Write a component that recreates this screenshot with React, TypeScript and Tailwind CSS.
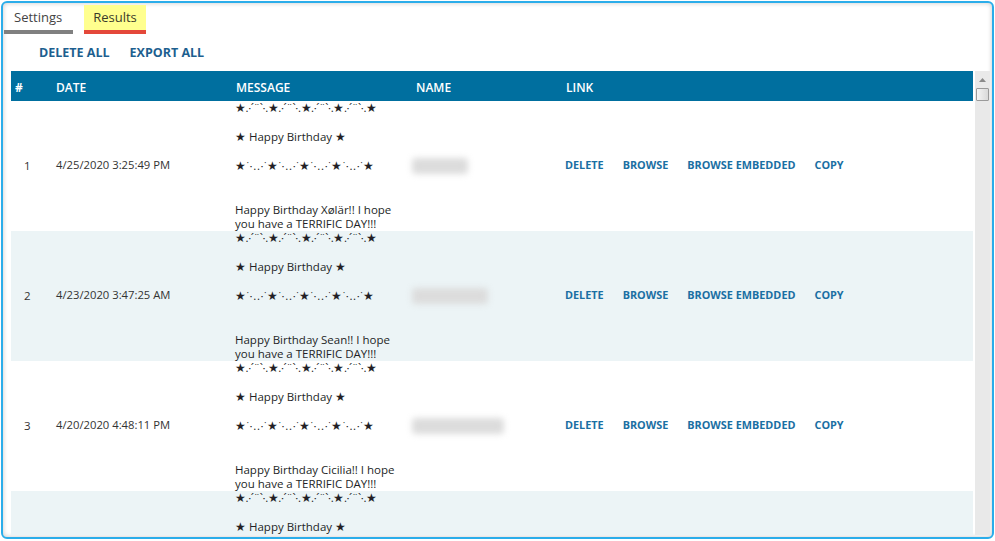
import React from 'react';

interface ResultRow {
  id: number;
  date: string;
  name: string;
  nameWidth: string;
  message: string;
}

const STAR_TOP = '★.·´¨`·.★.·´¨`·.★.·´¨`·.★.·´¨`·.★';
const STAR_BOTTOM = '★˙·..·˙★˙·..·˙★˙·..·˙★˙·..·˙★';

const rows: ResultRow[] = [
  { id: 1, date: '4/25/2020 3:25:49 PM', name: 'Xølär Kru', nameWidth: 'w-[56px]', message: 'Happy Birthday Xølär!! I hope you have a TERRIFIC DAY!!!' },
  { id: 2, date: '4/23/2020 3:47:25 AM', name: 'Sean Dunsby', nameWidth: 'w-[76px]', message: 'Happy Birthday Sean!! I hope you have a TERRIFIC DAY!!!' },
  { id: 3, date: '4/20/2020 4:48:11 PM', name: 'Cicilia Macamino', nameWidth: 'w-[92px]', message: 'Happy Birthday Cicilia!! I hope you have a TERRIFIC DAY!!!' },
  { id: 4, date: '4/18/2020 9:12:03 AM', name: 'Mara Kovacs', nameWidth: 'w-[70px]', message: 'Happy Birthday Mara!! I hope you have a TERRIFIC DAY!!!' },
];

const font = { fontFamily: '"Open Sans", "Noto Sans", sans-serif' };

function Message({ text }: { text: string }) {
  return (
    <div className="leading-[14.5px] text-[11.5px] text-[#231f26]">
      <div className="h-[14.5px] whitespace-nowrap tracking-[-0.42px]">{STAR_TOP}</div>
      <div className="h-[14.5px]" />
      <div className="h-[14.5px]">★ Happy Birthday ★</div>
      <div className="h-[14.5px]" />
      <div className="h-[14.5px] whitespace-nowrap tracking-[0.7px]">{STAR_BOTTOM}</div>
      <div className="h-[14.5px]" />
      <div className="h-[14.5px]" />
      <div className="w-[164px]">{text}</div>
    </div>
  );
}

export default function App() {
  return (
    <div className="w-[995px] h-[541px] bg-white pt-px pl-px pr-px pb-[2px]" style={font}>
      <div className="h-full rounded-md border-2 border-[#2badea] shadow-[inset_0_0_5px_rgba(0,0,0,0.22)] flex flex-col overflow-hidden">
        {/* tabs */}
        <div className="flex gap-[11px] pl-px pt-[2px]">
          <div className="flex flex-col w-[69px]">
            <div className="h-[25px] flex items-center pl-[10px] text-[13px] text-[#444]">Settings</div>
            <div className="h-[4px] bg-[#808080]" />
          </div>
          <div className="flex flex-col w-[62px]">
            <div className="h-[25px] flex items-center justify-center text-[13px] text-[#3a3a2a] bg-[#ffff8e]">Results</div>
            <div className="h-[4px] bg-[#e4483a]" />
          </div>
        </div>

        {/* toolbar */}
        <div className="h-[37px] flex items-center gap-[20px] pl-[36px] pt-[2px] text-[12.5px] font-bold text-[#1d5f8f]">
          <span>DELETE ALL</span>
          <span>EXPORT ALL</span>
        </div>

        {/* table */}
        <div className="flex-1 flex min-h-0 pl-[8px] pr-[2px] pb-[2px]">
          <div className="w-[962px] overflow-hidden">
            <div className="h-[30px] pt-[3px] bg-[#006f9f] text-white text-[12px] font-semibold grid grid-cols-[37px_180px_180px_150px_1fr] items-center">
              <div className="pl-[4px] font-bold">#</div>
              <div className="px-2">DATE</div>
              <div className="px-2">MESSAGE</div>
              <div className="px-2">NAME</div>
              <div className="px-2">LINK</div>
            </div>
            {rows.map((r, i) => (
              <div
                key={r.id}
                className={`h-[130px] grid grid-cols-[37px_180px_180px_150px_1fr] items-center ${i % 2 === 1 ? 'bg-[#ecf4f6]' : 'bg-white'}`}
              >
                <div className="pl-[13px] pb-[2px] text-[11.5px] text-[#333]">{r.id}</div>
                <div className="px-2 pb-[2px] text-[11.25px] text-[#333]">{r.date}</div>
                <div className="px-[7px]">
                  <Message text={r.message} />
                </div>
                <div className="pl-[4px]">
                  <div className={`${r.nameWidth} h-[16px] rounded bg-[#dcdcdc] blur-[3px]`} />
                </div>
                <div className="pl-[7px] pb-[2px] flex gap-[19px] text-[10.85px] font-bold text-[#1a6fa3]">
                  <span>DELETE</span>
                  <span>BROWSE</span>
                  <span>BROWSE EMBEDDED</span>
                  <span>COPY</span>
                </div>
              </div>
            ))}
          </div>

          {/* scrollbar */}
          <div className="ml-[2px] w-[15px] bg-[#e9e9e9] flex flex-col items-center">
            <div className="h-[17px] flex items-center justify-center">
              <svg width="7" height="4" viewBox="0 0 7 4">
                <path d="M0 4 L3.5 0 L7 4 Z" fill="#8a8a8a" />
              </svg>
            </div>
            <div className="w-[13px] h-[13px] border border-[#9a9a9a] bg-gradient-to-r from-[#f4f4f4] to-[#d9d9d9] rounded-[1px]" />
          </div>
        </div>
      </div>
    </div>
  );
}
